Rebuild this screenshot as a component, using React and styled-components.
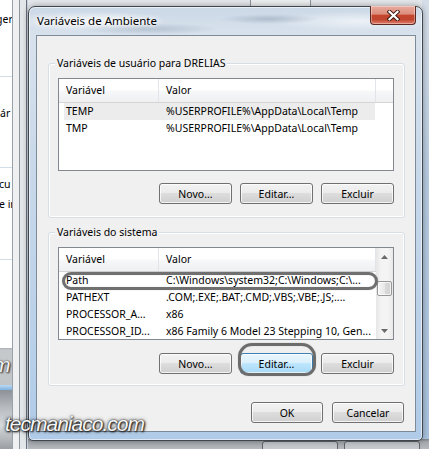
import React from "react";
import styled, { createGlobalStyle, css } from "styled-components";

const Global = createGlobalStyle`
  html, body { margin: 0; padding: 0; }
  body {
    width: 429px; height: 449px; overflow: hidden;
    background: #b8bec7;
    font-family: "Noto Sans", "Open Sans", sans-serif;
  }
`;

const FONT = `"Noto Sans", "Open Sans", sans-serif`;

/* ---------- desktop / background windows ---------- */
const Desktop = styled.div`
  position: relative;
  width: 429px;
  height: 449px;
  overflow: hidden;
  background: linear-gradient(#dfe3e8, #c9d0d8);
`;

const LeftPane = styled.div`
  position: absolute;
  left: 0; top: 0;
  width: 12px; height: 449px;
  background: #fff;
  border-right: 1px solid #9aa1a8;
  overflow: hidden;
  display: flex;
  flex-direction: column;
  font: 10.5px ${FONT};
  color: #000;
`;

const Frag = styled.div`
  flex: 0 0 ${(p) => p.$h}px;
  line-height: ${(p) => p.$h}px;
  white-space: nowrap;
  margin-left: ${(p) => p.$ml || 0}px;
`;

const Sep = styled.div`
  flex: 0 0 1px;
  background: #d3dde6;
`;

const GrayBand = styled.div`
  flex: 0 0 37px;
  background: linear-gradient(#a9adb2 0, #c6c9cc 2px, #c2c5c8 100%);
  font: italic 21px "Liberation Sans", sans-serif;
  line-height: 34px;
  color: #f2f2f2;
  margin-left: 0;
  text-indent: -7px;
  text-shadow: 0 0 2px #333, 1px 1px 2px #222;
`;

const BlueLine = styled.div`
  flex: 0 0 5px;
  background: linear-gradient(#bcd9f2, #7fb3e3);
`;

const BottomLeft = styled.div`
  flex: 1;
  background: linear-gradient(#8d9298, #b7bbc0 30%, #d7d9db 60%, #9a9ea3);
`;

const MidStrip = styled.div`
  position: absolute;
  left: 13px; top: 0;
  width: 15px; height: 449px;
  background: linear-gradient(
    to right,
    #eef0f2 0 6px,
    #8e949b 6px 7px,
    #e4e7ea 7px 13px,
    #6d737a 13px 14px,
    #c7d3df 14px
  );
`;

const TopStrip = styled.div`
  position: absolute;
  left: 28px; top: 0;
  width: 401px; height: 8px;
  background: linear-gradient(
    to right,
    #e4e7eb 0 222px,
    #8d949c 222px 223px,
    #eceef0 223px 282px,
    #8d949c 282px 283px,
    #e4e7eb 283px
  );
`;

const RightStrip = styled.div`
  position: absolute;
  right: 0; top: 0;
  width: 7px; height: 449px;
  background: linear-gradient(#d5dee8, #b7cbe0 40%, #a9c3de);
`;

const BottomStrip = styled.div`
  position: absolute;
  left: 28px; bottom: 0;
  width: 401px; height: 10px;
  background: linear-gradient(#7d8288, #a6aaaf 3px, #b5b8bc);
  display: flex;
  gap: 6px;
  padding: 2px 0 0 234px;
  box-sizing: border-box;
`;

const GhostBtn = styled.div`
  width: 74px;
  height: 12px;
  border: 1px solid #5f646a;
  border-radius: 3px;
  background: #c4c7cb;
`;

/* ---------- dialog ---------- */
const Dialog = styled.div`
  position: absolute;
  left: 28px; top: 6px;
  width: 395px; height: 435px;
  box-sizing: border-box;
  border: 1px solid #3f464e;
  border-radius: 7px 7px 5px 5px;
  padding: 0 6px 8px 7px;
  display: flex;
  flex-direction: column;
  box-shadow: inset 0 0 0 1px rgba(255, 255, 255, 0.6), 0 0 6px rgba(0, 0, 0, 0.35);
  background:
    radial-gradient(ellipse 70px 6px at 120px 22px, rgba(120, 140, 160, 0.35), transparent),
    radial-gradient(ellipse 50px 5px at 240px 12px, rgba(110, 130, 150, 0.35), transparent),
    radial-gradient(ellipse 80px 10px at 60px 14px, rgba(255, 255, 255, 0.75), transparent),
    radial-gradient(ellipse 90px 10px at 330px 14px, rgba(255, 255, 255, 0.6), transparent),
    linear-gradient(#cbd8e6 0, #d8e2ed 28px, #cddbea 120px, #b0cbe8 100%);
`;

const TitleBar = styled.div`
  flex: 0 0 28px;
  display: flex;
  align-items: flex-start;
`;

const Title = styled.div`
  font: 11.5px ${FONT};
  line-height: 28px;
  padding-left: 1px;
  color: #000;
  text-shadow: 0 0 6px #fff, 0 0 3px #fff, 0 0 10px rgba(255, 255, 255, 0.9);
`;

const CloseBtn = styled.div`
  margin-left: auto;
  margin-top: -1px;
  width: 46px;
  height: 19px;
  box-sizing: border-box;
  border: 1px solid #5a2820;
  border-top: none;
  border-radius: 0 0 4px 4px;
  display: flex;
  align-items: center;
  justify-content: center;
  background: linear-gradient(#e9ab9e 0%, #dc8d7c 45%, #c5452c 52%, #c04530 75%, #e0806a 100%);
  box-shadow: inset 0 0 0 1px rgba(255, 255, 255, 0.35);
`;

const Client = styled.div`
  flex: 1;
  background: #f0f0f0;
  border: 1px solid #7d8a98;
  display: flex;
  flex-direction: column;
  padding: 0 10px 0 11px;
  font: 10.5px ${FONT};
  color: #000;
`;

const Group = styled.div`
  display: flex;
  flex-direction: column;
  margin-top: ${(p) => p.$mt}px;
  padding: 0 10px ${(p) => p.$pb}px 9px;
  border: 1px solid #d5dfe5;
  border-radius: 3px;
  box-shadow: inset 0 0 0 1px #ffffff;
`;

const Caption = styled.div`
  align-self: flex-start;
  margin: -8px 0 0 -3px;
  padding: 0 2px;
  height: 15px;
  line-height: 15px;
  background: #f0f0f0;
  white-space: nowrap;
`;

const List = styled.div`
  position: relative;
  margin-top: 7px;
  height: 93px;
  box-sizing: border-box;
  border: 1px solid #828790;
  background: #fff;
  display: flex;
`;

const Columns = styled.div`
  flex: 1;
  display: flex;
  flex-direction: column;
  min-width: 0;
`;

const HeaderRow = styled.div`
  flex: 0 0 24px;
  box-sizing: border-box;
  display: flex;
  border-bottom: 1px solid #d5d5d5;
  background: linear-gradient(#ffffff 0%, #ffffff 45%, #f6f7f8 55%, #eef0f2 100%);
`;

const HeaderCell = styled.div`
  flex: 0 0 ${(p) => p.$w}px;
  box-sizing: border-box;
  padding-left: ${(p) => p.$pl}px;
  line-height: 22px;
  border-right: 1px solid #e1e5ea;
  white-space: nowrap;
`;

const Row = styled.div`
  flex: 0 0 17px;
  display: flex;
  padding-left: 5px;
`;

const RowBox = styled.div`
  display: flex;
  background: ${(p) => (p.$sel ? "#ececec" : "transparent")};
`;

const Cell = styled.div`
  flex: 0 0 ${(p) => p.$w}px;
  box-sizing: border-box;
  padding-left: ${(p) => p.$pl}px;
  line-height: 17px;
  white-space: nowrap;
  overflow: hidden;
`;

const Scrollbar = styled.div`
  flex: 0 0 17px;
  display: flex;
  flex-direction: column;
  background: linear-gradient(to right, #e6e6e6, #f4f4f4 30%, #f4f4f4 70%, #e9e9e9);
`;

const ArrowBtn = styled.div`
  flex: 0 0 17px;
  display: flex;
  align-items: center;
  justify-content: center;
`;

const Track = styled.div`
  flex: 1;
  padding-top: 16px;
`;

const Thumb = styled.div`
  height: 15px;
  margin: 0 1px;
  box-sizing: border-box;
  border: 1px solid #979797;
  border-radius: 2px;
  background: linear-gradient(to right, #f6f6f6, #e8e8e8 50%, #dadada 51%, #d2d2d2);
  box-shadow: inset 0 0 0 1px rgba(255, 255, 255, 0.7);
`;

const Ring = styled.div`
  position: absolute;
  box-sizing: border-box;
  border: 3px solid #707070;
  pointer-events: none;
  box-shadow: 0 0 1px rgba(0, 0, 0, 0.35), inset 0 0 1px rgba(0, 0, 0, 0.3);
`;

const PathRing = styled(Ring)`
  left: 3px; top: 24px;
  width: 316px; height: 18px;
  border-radius: 9px;
`;

const BtnRing = styled(Ring)`
  left: -2px; top: -10px;
  width: 78px; height: 33px;
  border-radius: 14px 14px 11px 11px;
  border-width: 3px;
  border-color: #6c6c6c;
`;

const ButtonRow = styled.div`
  display: flex;
  justify-content: flex-end;
  gap: 8px;
  margin-top: ${(p) => p.$mt}px;
  margin-right: ${(p) => p.$mr || 0}px;
`;

const BtnWrap = styled.div`
  position: relative;
  display: flex;
`;

const Btn = styled.div`
  box-sizing: border-box;
  width: ${(p) => p.$w || 73}px;
  height: 21px;
  display: flex;
  align-items: center;
  justify-content: center;
  font: 10.5px ${FONT};
  color: #000;
  border: 1px solid #707070;
  border-radius: 3px;
  background: linear-gradient(#f2f2f2 0%, #ebebeb 49%, #dddddd 50%, #cfcfcf 100%);
  box-shadow: inset 0 0 0 1px rgba(255, 255, 255, 0.75);
  ${(p) =>
    p.$hover &&
    css`
      border-color: #3c7fb1;
      background: linear-gradient(#eaf6fd 0%, #d9f0fc 49%, #bee6fd 50%, #a7d9f5 100%);
    `}
`;

const Watermark = styled.div`
  position: absolute;
  left: 5px; top: 413px;
  font: italic 21px "Liberation Sans", sans-serif;
  line-height: 21px;
  letter-spacing: -1px;
  color: #f6f6f6;
  text-shadow: 0 0 2px #111, 1px 1px 2px #111, 0 0 4px rgba(0, 0, 0, 0.6);
  white-space: nowrap;
`;

/* ---------- data ---------- */
const userVars = [
  ["TEMP", "%USERPROFILE%\\AppData\\Local\\Temp", true],
  ["TMP", "%USERPROFILE%\\AppData\\Local\\Temp", false],
];

const sysVars = [
  ["Path", "C:\\Windows\\system32;C:\\Windows;C:\\..."],
  ["PATHEXT", ".COM;.EXE;.BAT;.CMD;.VBS;.VBE;.JS;...."],
  ["PROCESSOR_A...", "x86"],
  ["PROCESSOR_ID...", "x86 Family 6 Model 23 Stepping 10, Gen..."],
];

const Header = () => (
  <HeaderRow>
    <HeaderCell $w={100} $pl={7}>Variável</HeaderCell>
    <HeaderCell $w={217} $pl={7}>Valor</HeaderCell>
  </HeaderRow>
);

const Rows = ({ data }) =>
  data.map(([name, value, sel]) => (
    <Row key={name}>
      <RowBox $sel={sel}>
        <Cell $w={94} $pl={2}>{name}</Cell>
        <Cell $w={217} $pl={8}>{value}</Cell>
      </RowBox>
    </Row>
  ));

const Arrow = ({ up }) => (
  <svg width="7" height="4" viewBox="0 0 7 4">
    <path d={up ? "M0 4 L3.5 0 L7 4 Z" : "M0 0 L3.5 4 L7 0 Z"} fill="#6a6a6a" />
  </svg>
);

const CloseX = () => (
  <svg width="13" height="11" viewBox="0 0 13 11">
    <path d="M2.5 1.8 L10.5 9.2 M10.5 1.8 L2.5 9.2" stroke="#3a1a14" strokeWidth="4" strokeLinecap="square" />
    <path d="M2.5 1.8 L10.5 9.2 M10.5 1.8 L2.5 9.2" stroke="#ffffff" strokeWidth="2.2" strokeLinecap="square" />
  </svg>
);

export default function App() {
  return (
    <>
      <Global />
      <Desktop>
        <LeftPane>
          <Frag $h={11} />
          <Frag $h={16} $ml={-4}>ger</Frag>
          <Frag $h={49} />
          <Sep />
          <Frag $h={28} />
          <Frag $h={16} $ml={0}>ár</Frag>
          <Frag $h={46} />
          <Sep />
          <Frag $h={8} />
          <Frag $h={16} $ml={-1}>cu</Frag>
          <Frag $h={4} />
          <Frag $h={16} $ml={-1}>e ir</Frag>
          <Frag $h={47} />
          <Sep />
          <Frag $h={88} />
          <GrayBand>m</GrayBand>
          <BlueLine />
          <BottomLeft />
        </LeftPane>
        <MidStrip />
        <TopStrip />
        <RightStrip />
        <BottomStrip>
          <GhostBtn />
          <GhostBtn />
        </BottomStrip>

        <Dialog>
          <TitleBar>
            <Title>Variáveis de Ambiente</Title>
            <CloseBtn>
              <CloseX />
            </CloseBtn>
          </TitleBar>
          <Client>
            <Group $mt={27} $pb={13}>
              <Caption>Variáveis de usuário para DRELIAS</Caption>
              <List>
                <Columns>
                  <Header />
                  <Rows data={userVars} />
                </Columns>
              </List>
              <ButtonRow $mt={12}>
                <Btn>Novo...</Btn>
                <Btn>Editar...</Btn>
                <Btn>Excluir</Btn>
              </ButtonRow>
            </Group>

            <Group $mt={14} $pb={11}>
              <Caption>Variáveis do sistema</Caption>
              <List>
                <Columns>
                  <Header />
                  <Rows data={sysVars} />
                </Columns>
                <Scrollbar>
                  <ArrowBtn><Arrow up /></ArrowBtn>
                  <Track><Thumb /></Track>
                  <ArrowBtn><Arrow /></ArrowBtn>
                </Scrollbar>
                <PathRing />
              </List>
              <ButtonRow $mt={13}>
                <Btn>Novo...</Btn>
                <BtnWrap>
                  <Btn $hover>Editar...</Btn>
                  <BtnRing />
                </BtnWrap>
                <Btn>Excluir</Btn>
              </ButtonRow>
            </Group>

            <ButtonRow $mt={16} $mr={1} style={{ gap: 9 }}>
              <Btn $w={72}>OK</Btn>
              <Btn $w={72}>Cancelar</Btn>
            </ButtonRow>
          </Client>
        </Dialog>

        <Watermark>tecmaniaco.com</Watermark>
      </Desktop>
    </>
  );
}
